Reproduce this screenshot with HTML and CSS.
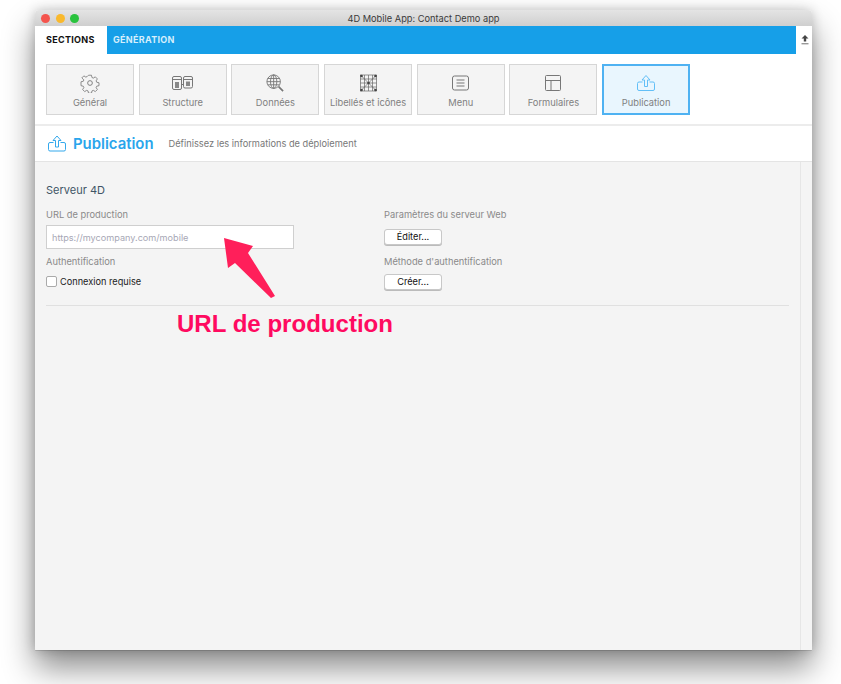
FILE: index.html
```html
<!DOCTYPE html>
<html lang="fr">
<head>
  <meta charset="UTF-8" />
  <title>4D Mobile App: Contact Demo app</title>
  <link rel="stylesheet" href="styles.css">
</head>
<body>
  <div class="fenetre">
    <div class="titre">
      <span class="feu rouge"></span><span class="feu jaune"></span><span class="feu vert"></span>
      <span class="titre-texte">4D Mobile App: Contact Demo app</span>
    </div>

    <div class="onglets">
      <div class="onglet actif">SECTIONS</div>
      <div class="bande">GÉNÉRATION</div>
      <div class="export">
        <svg width="8" height="10" viewBox="0 0 8 10"><path d="M4 0L7.5 3.6H5.2V6.6H2.8V3.6H.5Z" fill="#444"/><rect x=".5" y="8" width="7" height="1.4" fill="#999"/></svg>
      </div>
    </div>

    <div class="barre">
      <div class="outil">
        <svg width="22" height="22" viewBox="0 0 22 22" fill="none" stroke="#777" stroke-width="1"><path d="M9.2 1.5h3.6l.6 2.8 1.7.7 2.4-1.5 2.5 2.5-1.5 2.4.7 1.7 2.8.6v3.6l-2.8.6-.7 1.7 1.500 2.400-2.500 2.500-2.400-1.500-1.700.7-.6 2.800H9.200l-.6-2.800-1.700-.7-2.400 1.500-2.500-2.500 1.500-2.400-.7-1.700-2.800-.6V9.500l2.800-.6.7-1.700L1 4.800l2.500-2.500 2.400 1.500 1.700-.7z" transform="translate(1.100 1.100) scale(.9)"/><circle cx="11" cy="11" r="2.600"/></svg>
        <span>Général</span>
      </div>
      <div class="outil">
        <svg width="21" height="14" viewBox="0 0 21 14" fill="none" stroke="#777" stroke-width="1"><rect x=".5" y=".5" width="9" height="13" rx="1.500"/><path d="M.5 3.500h9"/><rect x="3" y="6" width="4" height="6" fill="#888" stroke="none"/><rect x="11.500" y=".5" width="9" height="11.500" rx="1.500"/><path d="M11.500 3.500h9M9.500 8.500h2"/><rect x="14" y="5.500" width="4" height="4.500" fill="#888" stroke="none"/></svg>
        <span>Structure</span>
      </div>
      <div class="outil">
        <svg width="18" height="18" viewBox="0 0 20 20" fill="none" stroke="#777" stroke-width="1"><circle cx="8.500" cy="8.500" r="7.500"/><ellipse cx="8.500" cy="8.500" rx="3.500" ry="7.500"/><path d="M1 8.500h15M2 5h13M2 12h13M8.500 1v15"/><path d="M14 14l5 5" stroke-width="1.800"/></svg>
        <span>Données</span>
      </div>
      <div class="outil">
        <svg width="17" height="17" viewBox="0 0 17 17" fill="none" stroke="#666" stroke-width=".7"><rect x=".5" y=".5" width="16" height="16"/><path d="M.5 4.500h16M.5 8.500h16M.5 12.500h16M4.500 .5v16M8.500 .5v16M12.500 .5v16M.5 .5l16 16M16.500 .5l-16 16"/><g fill="#444" stroke="none"><circle cx="8.500" cy="8.500" r="1.300"/><circle cx="1.500" cy="1.500" r="1.300"/><circle cx="15.500" cy="1.500" r="1.300"/><circle cx="1.500" cy="15.500" r="1.300"/><circle cx="15.500" cy="15.500" r="1.300"/></g></svg>
        <span>Libellés et icônes</span>
      </div>
      <div class="outil">
        <svg width="17" height="15" viewBox="0 0 17 15" fill="none" stroke="#777" stroke-width="1"><rect x=".5" y=".5" width="16" height="14" rx="2"/><path d="M4.500 4.500h8M4.500 7.500h8M4.500 10.500h8"/></svg>
        <span>Menu</span>
      </div>
      <div class="outil">
        <svg width="16" height="16" viewBox="0 0 16 16" fill="none" stroke="#777" stroke-width="1"><rect x=".5" y=".5" width="15" height="15" rx="1"/><path d="M.5 5.500h15M6 5.500v10"/></svg>
        <span>Formulaires</span>
      </div>
      <div class="outil choisi">
        <svg width="18" height="17" viewBox="0 0 18 17" fill="none" stroke="#62bff7" stroke-width="1"><path d="M5.500 7.500H2a1.500 1.500 0 0 0-1.500 1.500v5.500A1.500 1.500 0 0 0 2 16h14a1.500 1.500 0 0 0 1.500-1.500V9A1.500 1.500 0 0 0 16 7.500h-3.500"/><path d="M7.500 12V5.500H5L9 1l4 4.500h-2.500V12z"/></svg>
        <span>Publication</span>
      </div>
    </div>

    <div class="entete">
      <svg width="18" height="17" viewBox="0 0 18 17" fill="none" stroke="#35a9ec" stroke-width="1"><path d="M5.500 7.500H2a1.500 1.500 0 0 0-1.500 1.500v5.500A1.500 1.500 0 0 0 2 16h14a1.500 1.500 0 0 0 1.500-1.500V9A1.500 1.500 0 0 0 16 7.500h-3.500"/><path d="M7.500 12V5.500H5L9 1l4 4.500h-2.500V12z"/></svg>
      <h1>Publication</h1>
      <p>Définissez les informations de déploiement</p>
    </div>

    <div class="contenu">
      <div class="panneau">
        <h2>Serveur 4D</h2>
        <div class="colonnes">
          <div class="colonne">
            <label>URL de production</label>
            <input type="text" placeholder="https://mycompany.com/mobile" />
            <label class="second">Authentification</label>
            <div class="case"><span class="coche"></span>Connexion requise</div>
          </div>
          <div class="colonne">
            <label>Paramètres du serveur Web</label>
            <button type="button">Éditer...</button>
            <label class="second-droite">Méthode d'authentification</label>
            <button type="button">Créer...</button>
          </div>
        </div>
        <div class="trait"></div>
      </div>
      <div class="ascenseur"></div>
    </div>
  </div>

  <svg class="fleche" width="60" height="70" viewBox="0 0 60 70"><path d="M3 7L32 15 27 22 54 65 50 67 14 32 7 37Z" fill="#ff1f5a"/></svg>
  <div class="annotation">URL de production</div>
</body>
</html>
```

FILE: styles.css
```css
html, body { height: 100%; }
body {
  margin: 0;
  background: white;
  font-family: Inter, "Noto Sans", sans-serif;
  overflow: hidden;
  position: relative;
}

.fenetre {
  width: 777px;
  height: 640px;
  margin: 10px 0 0 35px;
  display: flex;
  flex-direction: column;
  background: white;
  border-radius: 4px 4px 1px 1px;
  box-shadow: 0 1px 0 rgba(0,0,0,0.12), 0 18px 32px rgba(0,0,0,0.45), 0 0 12px rgba(0,0,0,0.2);
  overflow: hidden;
}

.titre {
  height: 16px;
  flex: none;
  display: flex;
  align-items: center;
  padding-left: 6px;
  gap: 5.500px;
  position: relative;
  background: linear-gradient(#e4e4e4, #cfcfcf);
}
.feu { width: 9px; height: 9px; border-radius: 50%; }
.rouge { background: #f4544d; }
.jaune { background: #f9b92d; }
.vert { background: #2ac33e; }
.titre-texte {
  position: absolute;
  left: 0;
  right: 0;
  text-align: center;
  font-size: 9.250px;
  color: #3a3a3a;
}

.onglets { height: 28px; flex: none; display: flex; font-size: 9px; font-weight: 700; letter-spacing: .3px; line-height: 28px; }
.onglet { width: 72px; padding-left: 11px; box-sizing: border-box; color: #111; }
.bande { width: 689px; padding-left: 6px; box-sizing: border-box; background: #169fe8; color: #d5eefc; }
.export { flex: 1; display: flex; align-items: center; justify-content: center; padding-left: 1px; }

.barre {
  height: 72px;
  flex: none;
  box-sizing: border-box;
  padding: 10px 0 0 11px;
  display: flex;
  gap: 4.700px;
  border-bottom: 2px solid #ececec;
}
.outil {
  width: 88px;
  height: 51px;
  box-sizing: border-box;
  border: 1px solid #d6d6d6;
  background: #f4f4f4;
  display: flex;
  flex-direction: column;
  align-items: center;
  font-size: 9.300px;
  color: #808080;
}
.outil svg { height: 20px; margin-top: 8px; }
.outil span { margin-top: auto; margin-bottom: 6px; white-space: nowrap; }
.choisi { border: 2px solid #4fb2f2; background: #e9f6fe; }
.choisi svg { margin-top: 7px; }
.choisi span { margin-bottom: 5px; }

.entete {
  height: 35px;
  flex: none;
  display: flex;
  align-items: center;
  padding-left: 13px;
  border-bottom: 1px solid #e4e4e4;
}
.entete h1 { margin: 0 0 0 7px; font-size: 14.900px; font-weight: 600; color: #2aa5ec; }
.entete p { margin: 0 0 0 15px; font-size: 9.250px; color: #777; }

.contenu { flex: 1; display: flex; background: #f4f4f4; }
.panneau { flex: 1; padding: 21px 11px 0 11px; }
.ascenseur { width: 11px; border-left: 1px solid #e6e6e6; }
h2 { margin: 0; font-size: 11px; font-weight: 400; color: #3f5566; line-height: 14px; }

.colonnes { display: flex; margin-top: 12px; }
.colonne { width: 338px; display: flex; flex-direction: column; align-items: flex-start; }
label { font-size: 9.300px; color: #8a8a8a; line-height: 12px; height: 12px; }
input {
  width: 248px;
  height: 24px;
  box-sizing: border-box;
  margin: 4px 0 0;
  padding: 0 5px;
  border: 1px solid #cfcfcf;
  background: white;
  font-family: inherit;
  font-size: 9.150px;
}
input::placeholder { color: #a7a7b5; opacity: 1; }
.second { margin-top: 7px; }
.case { display: flex; align-items: center; margin-top: 8px; font-size: 9.200px; color: #222; line-height: 10px; }
.coche {
  width: 9px;
  height: 9px;
  margin-right: 3px;
  background: white;
  border: 1px solid #aaa;
  border-radius: 2px;
}
button {
  width: 58px;
  height: 16px;
  margin-top: 8px;
  padding: 0 0 1px;
  background: white;
  border: 1px solid #c8c8c8;
  border-radius: 3px;
  box-shadow: 0 1px 0 #bbb;
  font-family: inherit;
  font-size: 9.200px;
  color: #111;
}
.second-droite { margin-top: 11px; }
.second-droite + button { margin-top: 6px; }
.trait { height: 1px; margin-top: 15px; background: #e0e0e0; }

.fleche { position: absolute; left: 221px; top: 231px; }
.annotation {
  position: absolute;
  left: 177px;
  top: 310px;
  font: 700 24.050px "Liberation Sans", Arial, sans-serif;
  color: #ff0a60;
}
```
